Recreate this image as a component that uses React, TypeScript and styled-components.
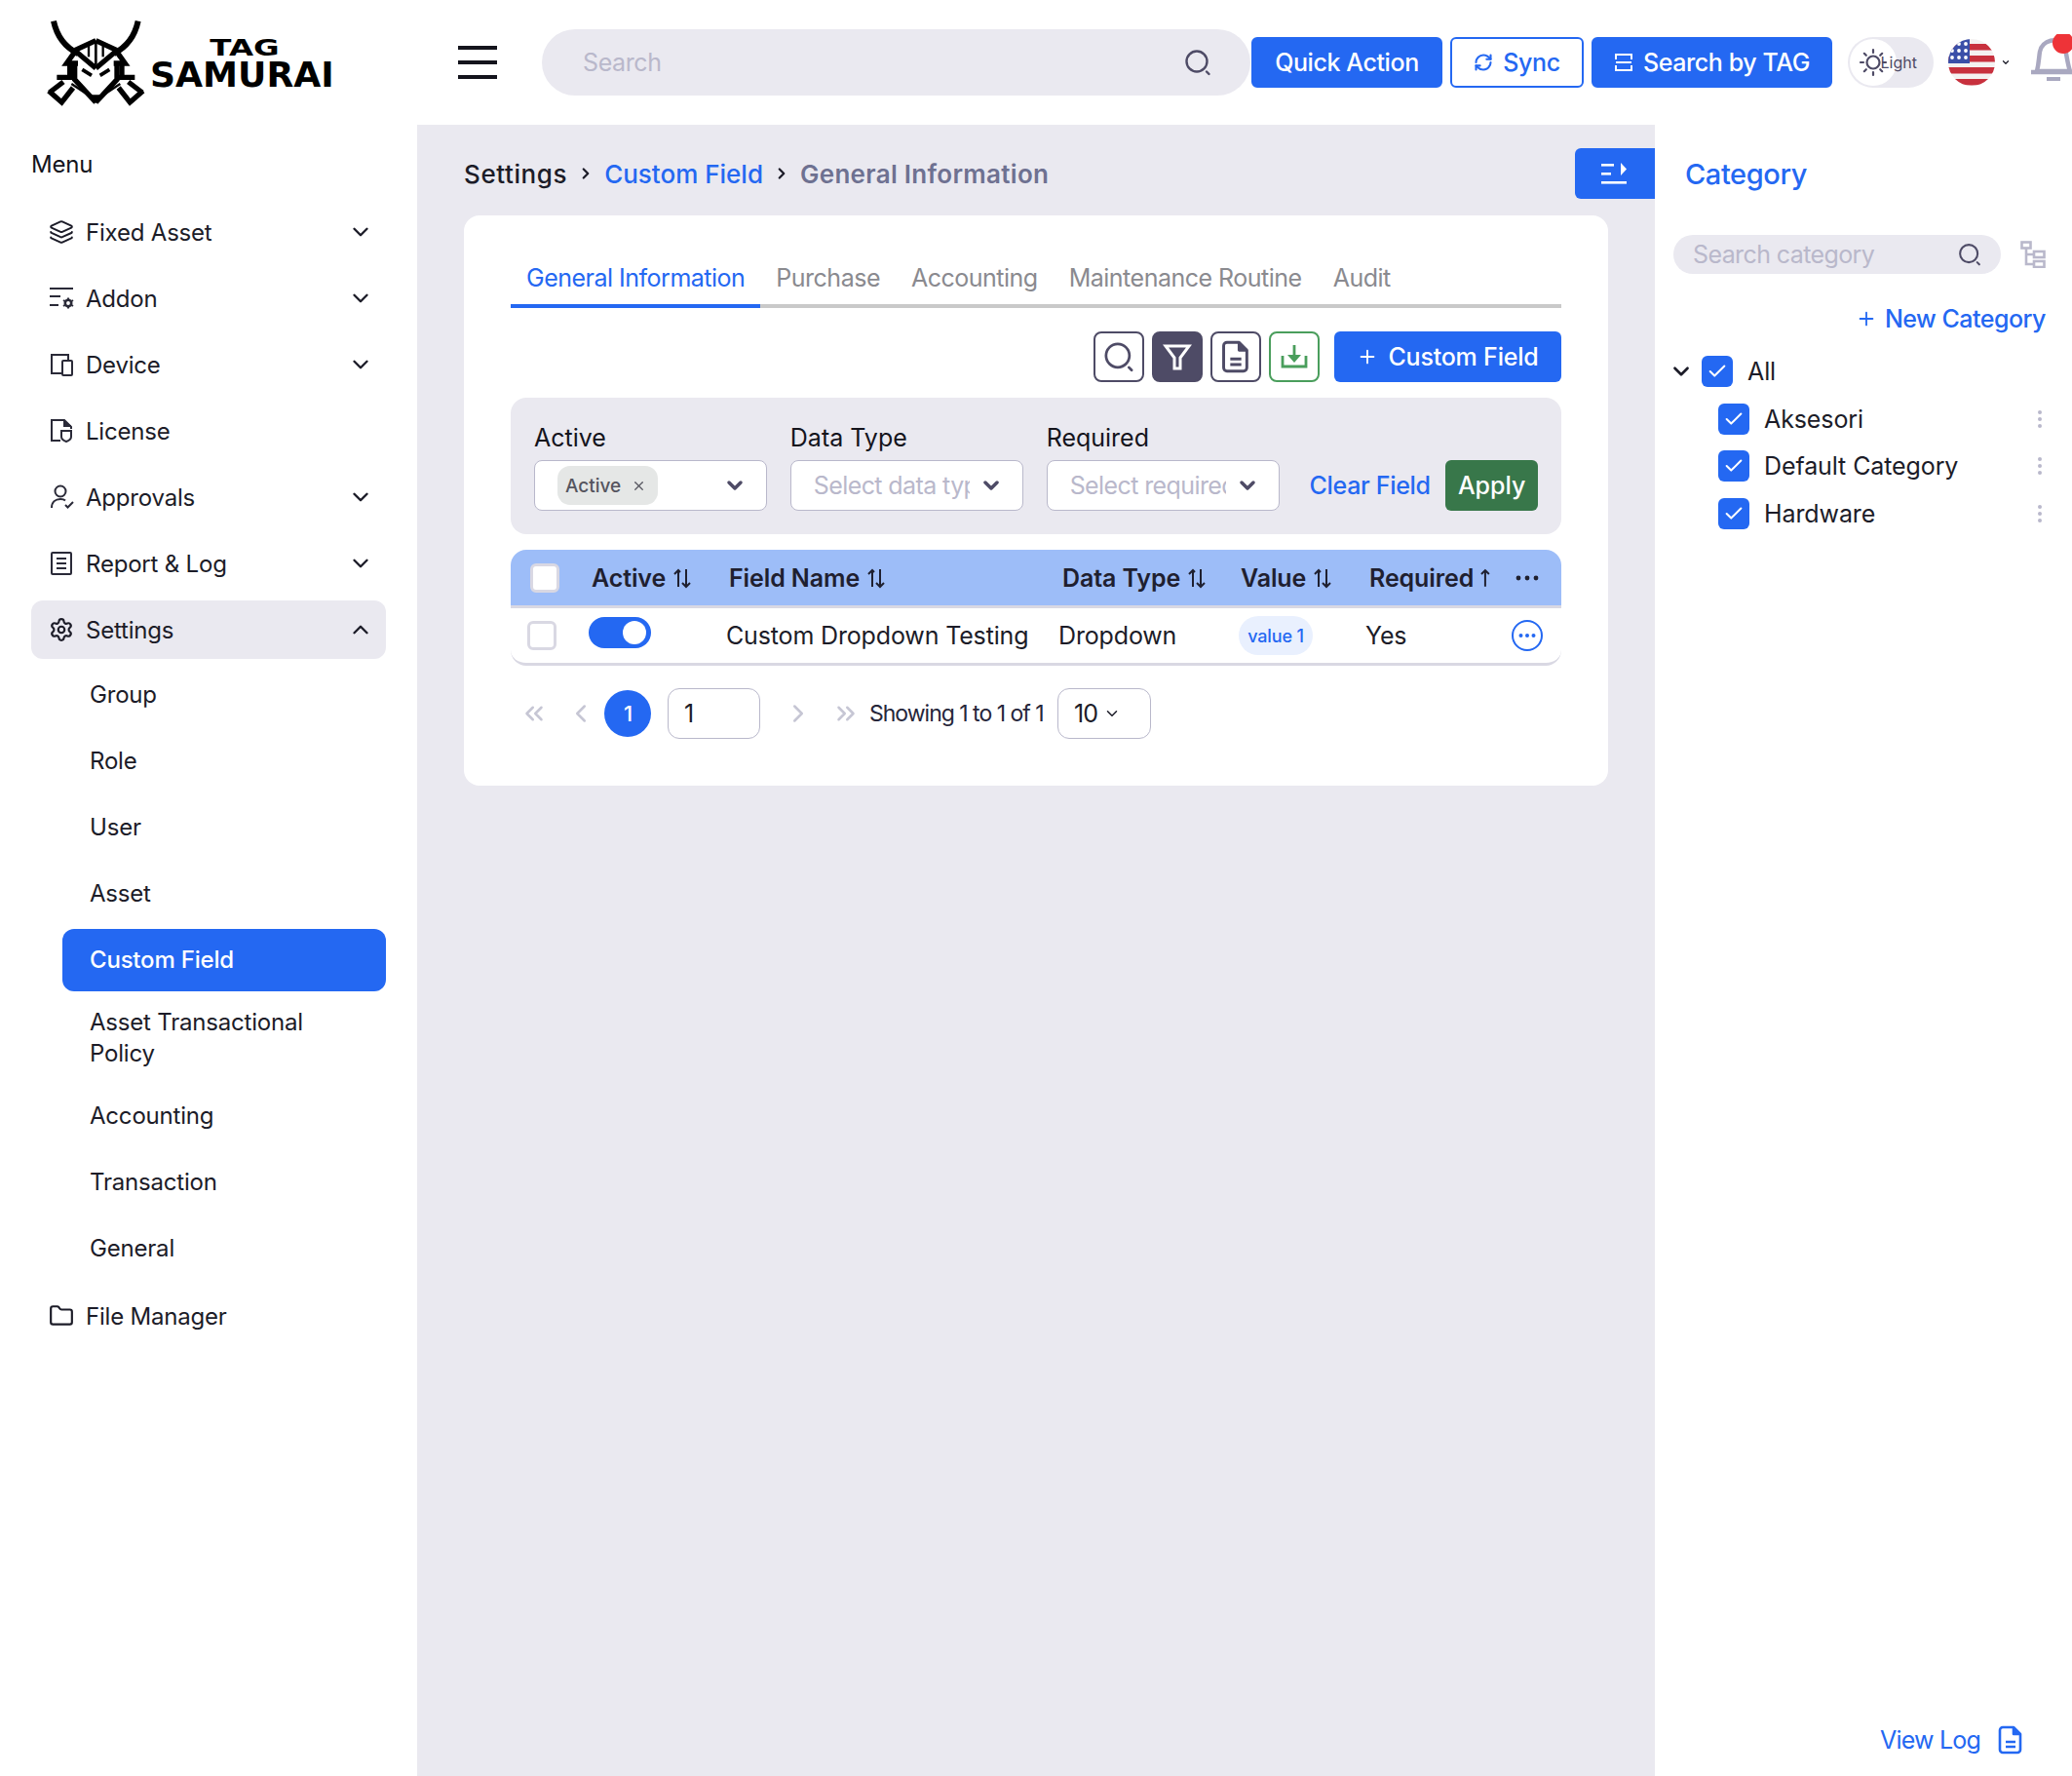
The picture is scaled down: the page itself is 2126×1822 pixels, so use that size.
import { createGlobalStyle, styled } from 'styled-components';
import type { ReactNode } from 'react';
import { ChevronDown, ChevronUp, ChevronLeft, ChevronRight, ChevronsLeft, ChevronsRight, Plus, Check, X, Layers, Settings, Folder, RefreshCw } from 'lucide-react';

const BLUE = '#2468f2';
const GREY = '#eae9f0';
const INK = '#1c1c28';

const GlobalStyle = createGlobalStyle`
  html, body { margin: 0; padding: 0; height: 100%; overflow: hidden; background: #fff; }
  * { box-sizing: border-box; }
  body { font-family: Inter, "Noto Sans", sans-serif; color: ${INK}; }
`;

const Page = styled.div`
  width: 2126px;
  height: 1822px;
  overflow: hidden;
  display: grid;
  grid-template-columns: 428px 1270px 428px;
  grid-template-rows: 128px 1fr;
`;

/* header */
const Header = styled.header`
  grid-column: 1 / -1;
  display: flex;
  align-items: center;
  padding-left: 30px;
  font-size: 25px;
  overflow: hidden;
  & > * { flex: none; }
`;

const LogoSvg = styled.svg`
  display: block;
  margin-top: -3px;
`;

const Burger = styled.div`
  margin-left: 110px;
  width: 40px;
  display: flex;
  flex-direction: column;
  gap: 11px;
  span { display: block; height: 4px; background: #14141c; }
`;

const SearchPill = styled.div`
  margin-left: 46px;
  width: 727px;
  height: 68px;
  border-radius: 34px;
  background: ${GREY};
  display: flex;
  align-items: center;
  justify-content: space-between;
  padding: 0 40px 0 42px;
  color: #b9b8cb;
  letter-spacing: -0.4px;
`;

const HeadButton = styled.button<{ $width: number; $gap: number; $outline?: boolean }>`
  width: ${p => p.$width}px;
  height: 52px;
  margin-left: ${p => p.$gap}px;
  border-radius: 6px;
  border: 2px solid ${BLUE};
  background: ${p => (p.$outline ? '#fff' : BLUE)};
  color: ${p => (p.$outline ? BLUE : '#fff')};
  font: 500 25px Inter, sans-serif;
  letter-spacing: -0.4px;
  display: flex;
  align-items: center;
  justify-content: center;
  gap: 10px;
  padding: 0;
  white-space: nowrap;
`;

const ThemeToggle = styled.div`
  position: relative;
  margin-left: 16px;
  width: 88px;
  height: 52px;
  border-radius: 26px;
  background: ${GREY};
  font-size: 16px;
  color: #4e4b66;
  display: flex;
  align-items: center;
  justify-content: flex-end;
  padding-right: 17px;
`;

const ThemeLabel = styled.span`
  position: relative;
  z-index: 1;
`;

const ThemeKnob = styled.span`
  position: absolute;
  left: 2px;
  top: 2px;
  width: 48px;
  height: 48px;
  border-radius: 50%;
  background: #fff;
  display: flex;
  align-items: center;
  justify-content: center;
`;

const FlagWrap = styled.div`
  margin-left: 15px;
  display: flex;
  align-items: center;
  gap: 6px;
`;

const BellWrap = styled.div`
  margin-left: 21px;
`;

/* sidebar */
const Sidebar = styled.aside`
  padding: 25px 32px 0;
  font-size: 24px;
  letter-spacing: -0.2px;
`;

const MenuTitle = styled.div`
  height: 32px;
  line-height: 32px;
  margin-bottom: 23px;
  color: #14141c;
`;

const NavList = styled.nav`
  display: flex;
  flex-direction: column;
  gap: 8px;
`;

const NavItem = styled.div<{ $open?: boolean }>`
  height: 60px;
  border-radius: 12px;
  background: ${p => (p.$open ? GREY : 'transparent')};
  display: flex;
  align-items: center;
  gap: 12px;
  padding: 0 13px 0 18px;
  svg { flex: none; }
  span { flex: 1; }
`;

const SubList = styled.div`
  margin: -3px 0 -1px 32px;
  display: flex;
  flex-direction: column;
  gap: 4px;
`;

const SubItem = styled.div<{ $active?: boolean; $tall?: boolean }>`
  height: ${p => (p.$tall ? 88 : 64)}px;
  border-radius: 12px;
  padding: 0 28px;
  display: flex;
  align-items: center;
  line-height: 32px;
  font-weight: ${p => (p.$active ? 500 : 400)};
  background: ${p => (p.$active ? BLUE : 'transparent')};
  color: ${p => (p.$active ? '#fff' : INK)};
`;

/* main column */
const Main = styled.main`
  position: relative;
  background: ${GREY};
  padding: 32px 48px 0;
`;

const Breadcrumb = styled.div`
  height: 36px;
  display: flex;
  align-items: center;
  gap: 10px;
  font-size: 26px;
  margin-bottom: 25px;
`;

const Crumb = styled.span<{ $color: string; $strong?: boolean; $spacing: number }>`
  color: ${p => p.$color};
  font-weight: ${p => (p.$strong ? 600 : 500)};
  letter-spacing: ${p => p.$spacing}px;
`;

const CollapseButton = styled.button`
  position: absolute;
  right: 0;
  top: 24px;
  width: 82px;
  height: 52px;
  border: 0;
  padding: 0;
  border-radius: 6px 0 0 6px;
  background: ${BLUE};
  display: flex;
  align-items: center;
  justify-content: center;
`;

const Card = styled.section`
  background: #fff;
  border-radius: 16px;
  height: 585px;
  padding: 36px 48px 0;
`;

const Tabs = styled.div`
  display: flex;
  border-bottom: 4px solid #c9c9c9;
  height: 59px;
  font-size: 25px;
  letter-spacing: -0.5px;
`;

const Tab = styled.div<{ $active?: boolean }>`
  height: 59px;
  padding: 0 16px;
  line-height: 57px;
  white-space: nowrap;
  color: ${p => (p.$active ? BLUE : '#8a8a8f')};
  border-bottom: 4px solid ${p => (p.$active ? BLUE : 'transparent')};
`;

const Toolbar = styled.div`
  margin-top: 24px;
  display: flex;
  justify-content: flex-end;
  align-items: center;
  gap: 8px;
`;

const ToolButton = styled.button<{ $tone?: 'dark' | 'green' }>`
  width: 52px;
  height: 52px;
  padding: 0;
  border-radius: 8px;
  border: 2px solid ${p => (p.$tone === 'green' ? '#4a9e5c' : '#4e4b66')};
  background: ${p => (p.$tone === 'dark' ? '#4e4b66' : '#fff')};
  display: flex;
  align-items: center;
  justify-content: center;
`;

const PrimaryButton = styled.button`
  margin-left: 7px;
  width: 233px;
  height: 52px;
  border: 0;
  border-radius: 6px;
  background: ${BLUE};
  color: #fff;
  font: 500 25px Inter, sans-serif;
  letter-spacing: -0.2px;
  display: flex;
  align-items: center;
  justify-content: center;
  gap: 10px;
`;

const FilterPanel = styled.div`
  margin-top: 16px;
  height: 140px;
  border-radius: 16px;
  background: ${GREY};
  padding: 24px;
  display: flex;
  align-items: flex-end;
  gap: 23.5px;
`;

const FilterField = styled.div`
  width: 240px;
  display: flex;
  flex-direction: column;
  gap: 6px;
`;

const FilterLabel = styled.label`
  font-size: 25px;
  line-height: 34px;
  color: #14141c;
`;

const SelectBox = styled.div`
  height: 52px;
  border: 1px solid #b9b8cb;
  border-radius: 8px;
  background: #fff;
  display: flex;
  align-items: center;
  justify-content: space-between;
  padding: 0 20px 0 23px;
`;

const Placeholder = styled.span`
  width: 160px;
  overflow: hidden;
  white-space: nowrap;
  font-size: 25px;
  letter-spacing: -0.6px;
  color: #b9b8cb;
`;

const Chip = styled.span`
  height: 40px;
  border-radius: 13px;
  background: #e5e7e6;
  display: inline-flex;
  align-items: center;
  gap: 11px;
  padding: 0 12px 0 8px;
  font-size: 19px;
  font-weight: 500;
  color: #55555f;
`;

const ClearLink = styled.span`
  color: ${BLUE};
  font-size: 25px;
  font-weight: 500;
  line-height: 52px;
  margin-left: 7px;
  letter-spacing: -0.3px;
  white-space: nowrap;
`;

const ApplyButton = styled.button`
  width: 95px;
  height: 52px;
  margin-left: -8px;
  border: 0;
  border-radius: 6px;
  background: #38774a;
  color: #fff;
  font: 500 25px Inter, sans-serif;
  padding: 0;
`;

const HeadRow = styled.div`
  margin-top: 16px;
  height: 60px;
  border-radius: 16px 16px 0 0;
  background: #9dbdf8;
  border-bottom: 3px solid #d9d8e3;
  display: grid;
  grid-template-columns: 83px 141px 342px 183px 132px 125px 1fr;
  align-items: center;
  font-size: 25px;
  font-weight: 600;
  letter-spacing: -0.1px;
  color: #1f2030;
`;

const HeadCell = styled.div`
  display: flex;
  align-items: center;
  gap: 6px;
  white-space: nowrap;
`;

const CheckCell = styled.div`
  padding-left: 20px;
  display: flex;
`;

const DotsCell = styled.div`
  display: flex;
  justify-content: center;
  padding-left: 2px;
`;

const BlankBox = styled.span`
  width: 30px;
  height: 30px;
  border-radius: 6px;
  background: #fff;
  border: 3px solid #d9d8e3;
  display: block;
`;

const BodyRow = styled.div`
  height: 59px;
  border-radius: 0 0 16px 16px;
  border-bottom: 3px solid #d9d8e3;
  display: grid;
  grid-template-columns: 80px 141px 341px 185px 130px 125px 1fr;
  align-items: center;
  font-size: 25px;
  letter-spacing: -0.15px;
  white-space: nowrap;
  & > div:first-child { padding-left: 17px; }
  & > div:last-child { padding-left: 6px; }
`;

const Switch = styled.span`
  position: relative;
  display: block;
  width: 64px;
  height: 32px;
  margin-top: -6px;
  border-radius: 16px;
  background: ${BLUE};
  &::after {
    content: '';
    position: absolute;
    right: 5px;
    top: 4px;
    width: 24px;
    height: 24px;
    border-radius: 50%;
    background: #fff;
  }
`;

const ValueTag = styled.span`
  display: inline-flex;
  align-items: center;
  justify-content: center;
  width: 76px;
  height: 40px;
  border-radius: 20px;
  background: #e9f0fe;
  color: ${BLUE};
  font-size: 18px;
  font-weight: 500;
`;

const Pagination = styled.div`
  margin-top: 23px;
  height: 52px;
  display: flex;
  align-items: center;
  font-size: 23px;
  letter-spacing: -1px;
`;

const PageIcon = styled.span<{ $width: number }>`
  width: ${p => p.$width}px;
  flex: none;
  display: flex;
  justify-content: center;
  color: #c6c6d4;
  svg { flex: none; }
`;

const PageDot = styled.span`
  width: 48px;
  height: 48px;
  margin-right: 17px;
  border-radius: 50%;
  background: ${BLUE};
  color: #fff;
  font-size: 22px;
  font-weight: 500;
  display: flex;
  align-items: center;
  justify-content: center;
`;

const PageBox = styled.div<{ $width: number }>`
  width: ${p => p.$width}px;
  height: 52px;
  border: 1px solid #b9b8cb;
  border-radius: 12px;
  display: flex;
  align-items: center;
  justify-content: flex-start;
  gap: 6px;
  padding-left: 16px;
  font-size: 25px;
`;

const ShowingText = styled.span`
  width: 193px;
  margin-left: 14px;
  white-space: nowrap;
  color: #26263a;
`;

/* category panel */
const Panel = styled.aside`
  position: relative;
  padding: 32px 27px 0 19px;
  font-size: 25px;
`;

const PanelTitle = styled.h2`
  margin: 0 0 0 12px;
  height: 38px;
  line-height: 38px;
  font-size: 29px;
  font-weight: 500;
  letter-spacing: -0.4px;
  color: ${BLUE};
`;

const CategoryRow = styled.div`
  margin-top: 43px;
  display: flex;
  align-items: center;
  gap: 20px;
`;

const CategorySearch = styled.div`
  width: 336px;
  height: 40px;
  border-radius: 20px;
  background: ${GREY};
  display: flex;
  align-items: center;
  justify-content: space-between;
  padding: 0 20px;
  color: #b9b8cb;
  font-size: 25px;
  letter-spacing: -0.6px;
`;

const NewCategory = styled.div`
  margin-top: 26px;
  height: 40px;
  display: flex;
  align-items: center;
  justify-content: flex-end;
  gap: 8px;
  color: ${BLUE};
  font-weight: 500;
  letter-spacing: -0.5px;
`;

const Tree = styled.div`
  margin-top: 18px;
  display: flex;
  flex-direction: column;
  gap: 16.6px;
`;

const TreeRow = styled.div<{ $child?: boolean }>`
  height: 32px;
  display: flex;
  align-items: center;
  padding-left: ${p => (p.$child ? 46 : 0)}px;
  gap: 15px;
`;

const TreeLabel = styled.span`
  flex: 1;
  letter-spacing: -0.1px;
`;

const TreeToggle = styled.span`
  width: 16px;
  margin-right: -2px;
  display: flex;
  justify-content: center;
  svg { flex: none; }
`;

const CheckBox = styled.span`
  width: 32px;
  height: 32px;
  flex: none;
  border-radius: 6px;
  background: ${BLUE};
  color: #fff;
  display: flex;
  align-items: center;
  justify-content: center;
`;

const Kebab = styled.div`
  display: flex;
  flex-direction: column;
  gap: 3px;
  margin-right: 4px;
  i { width: 4px; height: 4px; border-radius: 50%; background: #b9b8cb; display: block; }
`;

const ViewLog = styled.div`
  position: absolute;
  right: 48px;
  bottom: 22px;
  display: flex;
  align-items: center;
  gap: 16px;
  color: ${BLUE};
  letter-spacing: -0.8px;
`;

/* drawings */
const MaskHalf = () => (
  <>
    <path d="M75 35 Q90 105 150 135" strokeWidth={18} />
    <path d="M205 95 L140 125 L205 180" />
    <path d="M140 130 L115 165 H150 M85 208 H140 M125 170 V215 M62 255 L105 222 M60 250 L100 285 L135 240" />
    <path d="M140 165 V215 L205 285" />
    <path d="M130 228 L190 268" strokeWidth={7} />
    <path d="M163 184 L192 202" strokeWidth={11} />
    <path d="M183 108 V145" strokeWidth={7} />
  </>
);

const Logo = () => (
  <LogoSvg width={330} height={105} viewBox="0 0 990 315">
    <g fill="none" stroke="#000" strokeWidth={16}>
      <MaskHalf />
      <g transform="matrix(-1 0 0 1 410 0)"><MaskHalf /></g>
      <path d="M205 95 V170" strokeWidth={8} />
    </g>
    <path d="M185 262 H225 L205 288 Z" fill="#000" />
    <text x={556} y={140} fontFamily="DejaVu Sans" fontWeight={700} fontSize={70} textLength={214} lengthAdjust="spacingAndGlyphs">TAG</text>
    <text x={372} y={238} fontFamily="DejaVu Sans" fontWeight={700} fontSize={105} textLength={566} lengthAdjust="spacingAndGlyphs">SAMURAI</text>
  </LogoSvg>
);

const SearchGlyph = ({ size = 28, color = '#4e4b66' }: { size?: number; color?: string }) => (
  <svg width={size} height={size} viewBox="0 0 28 28" fill="none" stroke={color} strokeWidth={2.4}>
    <circle cx={13} cy={13} r={10.5} />
    <path d="M23 23.5 L25.5 26" strokeLinecap="round" />
  </svg>
);

const Sun = () => (
  <svg width={30} height={30} viewBox="0 0 30 30" fill="none" stroke="#4e4b66" strokeWidth={2.2} strokeLinecap="round">
    <circle cx={15} cy={15} r={6.5} />
    <path d="M15 2v3M15 25v3M2 15h3M25 15h3M5.8 5.8l2 2M22.2 22.2l2 2M5.8 24.2l2-2M22.2 7.8l2-2" />
  </svg>
);

const UsFlag = () => (
  <svg width={48} height={48} viewBox="0 0 48 48">
    <defs>
      <clipPath id="flagCircle"><circle cx={24} cy={24} r={24} /></clipPath>
    </defs>
    <g clipPath="url(#flagCircle)">
      <rect width={48} height={48} fill="#f4f1f1" />
      {[5, 17, 29, 41].map(y => <rect key={y} y={y} width={48} height={6.5} fill="#c8313e" />)}
      <rect width={22} height={25} fill="#3a4fa8" />
      {[4, 11, 18].flatMap(x => [5, 12, 19].map(y => (
        <circle key={`${x}-${y}`} cx={x} cy={y} r={1.9} fill="#fff" />
      )))}
    </g>
  </svg>
);

const Bell = () => (
  <svg width={52} height={52} viewBox="0 0 52 52" fill="none">
    <path d="M6 38 C8 30 8 24 9 18 C11 6 28 2 34 12 C36 16 37 30 40 38 Z" stroke="#a9a8c0" strokeWidth={4.5} strokeLinejoin="round" />
    <path d="M0 39 H46" stroke="#a9a8c0" strokeWidth={4.5} />
    <rect x={16} y={44} width={14} height={4} fill="#a9a8c0" />
    <circle cx={33} cy={9} r={11} fill="#ee3338" />
  </svg>
);

const AddonIcon = () => (
  <svg width={26} height={26} viewBox="0 0 26 26" fill="none" stroke="#2a2a38" strokeWidth={2}>
    <path d="M1 3h24M1 11h11M1 20h9" />
    <circle cx={20} cy={18} r={3.2} strokeWidth={2.6} />
    <path d="M20 12.5v2M20 21.5v2M15 15l1.6 1M23.4 20l1.6 1M15 21l1.6-1M23.4 16l1.6-1" />
  </svg>
);

const DeviceIcon = () => (
  <svg width={26} height={26} viewBox="0 0 26 26" fill="none" stroke="#2a2a38" strokeWidth={2}>
    <path d="M14 22H3V3h17v6" />
    <rect x={14} y={9} width={10} height={15} rx={1} />
  </svg>
);

const LicenseIcon = () => (
  <svg width={26} height={26} viewBox="0 0 26 26" fill="none" stroke="#2a2a38" strokeWidth={2}>
    <path d="M12 23H3V2h13l7 7v2" />
    <path d="M16 2v6h7" fill="#2a2a38" />
    <path d="M13 13h10v6c0 3-2 4-5 5-3-1-5-2-5-5z" />
  </svg>
);

const ApprovalIcon = () => (
  <svg width={26} height={26} viewBox="0 0 26 26" fill="none" stroke="#2a2a38" strokeWidth={2}>
    <circle cx={12} cy={7} r={5.5} />
    <path d="M3 24c0-6 4-9 9-9 2.5 0 4 .5 5 1.5" />
    <path d="M17 21l2.5 2.5L25 18" />
  </svg>
);

const ReportIcon = () => (
  <svg width={26} height={26} viewBox="0 0 26 26" fill="none" stroke="#2a2a38" strokeWidth={2}>
    <rect x={3} y={2} width={20} height={22} rx={1} />
    <path d="M8 8h10M8 13h10M8 18h10" />
  </svg>
);

const DocIcon = ({ color, size = 34 }: { color: string; size?: number }) => (
  <svg width={size} height={size} viewBox="0 0 30 30" fill="none" stroke={color} strokeWidth={2.6} strokeLinejoin="round">
    <path d="M7 2h11l7 7v16a3 3 0 0 1-3 3H7a3 3 0 0 1-3-3V5a3 3 0 0 1 3-3z" />
    <path d="M10 17h10M10 22h10" />
    <path d="M18 2v7h7" fill={color} />
  </svg>
);

const FunnelIcon = () => (
  <svg width={30} height={30} viewBox="0 0 30 30" fill="none" stroke="#fff" strokeWidth={3}>
    <path d="M3 4h24L18 16v11h-6V16z" />
  </svg>
);

const ExportIcon = () => (
  <svg width={30} height={30} viewBox="0 0 30 30" fill="none" stroke="#4a9e5c" strokeWidth={2.8}>
    <path d="M3 14v11h24V14" />
    <path d="M15 3v13" />
    <path d="M8 13h14l-7 8z" fill="#4a9e5c" stroke="none" />
  </svg>
);

const SortIcon = () => (
  <svg width={22} height={22} viewBox="0 0 22 22" fill="none" stroke="#1f2030" strokeWidth={2}>
    <path d="M7 20V3M3 7l4-4 2 2M15 2v18M11 16l4 4 4-4" />
  </svg>
);

const UpIcon = () => (
  <svg width={12} height={22} viewBox="0 0 12 22" fill="none" stroke="#1f2030" strokeWidth={2}>
    <path d="M6 20V3M2 7l4-4 4 4" />
  </svg>
);

const ThreeDots = ({ color = '#1f2030' }: { color?: string }) => (
  <svg width={24} height={6} viewBox="0 0 24 6" fill={color}>
    <circle cx={3} cy={3} r={2.4} />
    <circle cx={12} cy={3} r={2.4} />
    <circle cx={21} cy={3} r={2.4} />
  </svg>
);

const CircleDots = () => (
  <svg width={32} height={32} viewBox="0 0 32 32" fill="none">
    <circle cx={16} cy={16} r={15} stroke={BLUE} strokeWidth={2} />
    <circle cx={9.5} cy={16} r={2} fill={BLUE} />
    <circle cx={16} cy={16} r={2} fill={BLUE} />
    <circle cx={22.5} cy={16} r={2} fill={BLUE} />
  </svg>
);

const CollapseIcon = () => (
  <svg width={28} height={24} viewBox="0 0 28 24" fill="#fff">
    <rect x={0} y={2} width={13} height={2.6} />
    <rect x={0} y={11} width={10} height={2.6} />
    <rect x={0} y={20} width={26} height={2.6} />
    <path d="M20 1l6 6.5-6 6.5z" />
  </svg>
);

const TreeIcon = () => (
  <svg width={26} height={28} viewBox="0 0 26 28" fill="none" stroke="#b9b8cb" strokeWidth={2.6}>
    <rect x={1.5} y={1.5} width={9} height={6} />
    <rect x={14} y={11} width={10.5} height={6} />
    <rect x={14} y={21} width={10.5} height={6} />
    <path d="M6 8v16h8M6 14h8" />
  </svg>
);

const TagIcon = () => (
  <svg width={20} height={20} viewBox="0 0 20 20" fill="none" stroke="#fff" strokeWidth={2}>
    <path d="M2 7V2h16v5M2 13v5h16v-5M2 10h16" />
  </svg>
);

const navChevron = <ChevronDown size={26} strokeWidth={2.2} />;

const topNav: { label: string; icon: ReactNode; chevron: boolean }[] = [
  { label: 'Fixed Asset', icon: <Layers size={26} strokeWidth={1.8} />, chevron: true },
  { label: 'Addon', icon: <AddonIcon />, chevron: true },
  { label: 'Device', icon: <DeviceIcon />, chevron: true },
  { label: 'License', icon: <LicenseIcon />, chevron: false },
  { label: 'Approvals', icon: <ApprovalIcon />, chevron: true },
  { label: 'Report & Log', icon: <ReportIcon />, chevron: true },
];

const tabs = ['General Information', 'Purchase', 'Accounting', 'Maintenance Routine', 'Audit'];

export default function App() {
  return (
    <Page>
      <GlobalStyle />
      <Header>
        <Logo />
        <Burger><span /><span /><span /></Burger>
        <SearchPill>
          Search
          <SearchGlyph />
        </SearchPill>
        <HeadButton $width={196} $gap={1}>Quick Action</HeadButton>
        <HeadButton $width={137} $gap={8} $outline><RefreshCw size={20} strokeWidth={2.5} />Sync</HeadButton>
        <HeadButton $width={247} $gap={8}><TagIcon />Search by TAG</HeadButton>
        <ThemeToggle>
          <ThemeLabel>Light</ThemeLabel>
          <ThemeKnob><Sun /></ThemeKnob>
        </ThemeToggle>
        <FlagWrap>
          <UsFlag />
          <ChevronDown size={10} strokeWidth={3} />
        </FlagWrap>
        <BellWrap><Bell /></BellWrap>
      </Header>

      <Sidebar>
        <MenuTitle>Menu</MenuTitle>
        <NavList>
          {topNav.map(item => (
            <NavItem key={item.label}>
              {item.icon}
              <span>{item.label}</span>
              {item.chevron && navChevron}
            </NavItem>
          ))}
          <NavItem $open>
            <Settings size={26} strokeWidth={2} />
            <span>Settings</span>
            <ChevronUp size={26} strokeWidth={2.2} />
          </NavItem>
          <SubList>
            <SubItem>Group</SubItem>
            <SubItem>Role</SubItem>
            <SubItem>User</SubItem>
            <SubItem>Asset</SubItem>
            <SubItem $active>Custom Field</SubItem>
            <SubItem $tall>Asset Transactional Policy</SubItem>
            <SubItem>Accounting</SubItem>
            <SubItem>Transaction</SubItem>
            <SubItem>General</SubItem>
          </SubList>
          <NavItem>
            <Folder size={26} strokeWidth={2} />
            <span>File Manager</span>
          </NavItem>
        </NavList>
      </Sidebar>

      <Main>
        <Breadcrumb>
          <Crumb $color="#1c1c28" $spacing={0.6}>Settings</Crumb>
          <ChevronRight size={18} strokeWidth={3} />
          <Crumb $color={BLUE} $spacing={0}>Custom Field</Crumb>
          <ChevronRight size={18} strokeWidth={3} />
          <Crumb $color="#6e7191" $strong $spacing={0.3}>General Information</Crumb>
        </Breadcrumb>
        <CollapseButton><CollapseIcon /></CollapseButton>
        <Card>
          <Tabs>
            {tabs.map((t, i) => <Tab key={t} $active={i === 0}>{t}</Tab>)}
          </Tabs>
          <Toolbar>
            <ToolButton><SearchGlyph size={32} /></ToolButton>
            <ToolButton $tone="dark"><FunnelIcon /></ToolButton>
            <ToolButton><DocIcon color="#4e4b66" /></ToolButton>
            <ToolButton $tone="green"><ExportIcon /></ToolButton>
            <PrimaryButton><Plus size={22} strokeWidth={2} />Custom Field</PrimaryButton>
          </Toolbar>
          <FilterPanel>
            <FilterField>
              <FilterLabel>Active</FilterLabel>
              <SelectBox>
                <Chip>Active <X size={15} strokeWidth={2} /></Chip>
                <ChevronDown size={24} strokeWidth={3.5} color="#4e4b66" />
              </SelectBox>
            </FilterField>
            <FilterField>
              <FilterLabel>Data Type</FilterLabel>
              <SelectBox>
                <Placeholder>Select data type</Placeholder>
                <ChevronDown size={24} strokeWidth={3.5} color="#4e4b66" />
              </SelectBox>
            </FilterField>
            <FilterField>
              <FilterLabel>Required</FilterLabel>
              <SelectBox>
                <Placeholder>Select required</Placeholder>
                <ChevronDown size={24} strokeWidth={3.5} color="#4e4b66" />
              </SelectBox>
            </FilterField>
            <ClearLink>Clear Field</ClearLink>
            <ApplyButton>Apply</ApplyButton>
          </FilterPanel>
          <HeadRow>
            <CheckCell><BlankBox /></CheckCell>
            <HeadCell>Active <SortIcon /></HeadCell>
            <HeadCell>Field Name <SortIcon /></HeadCell>
            <HeadCell>Data Type <SortIcon /></HeadCell>
            <HeadCell>Value <SortIcon /></HeadCell>
            <HeadCell>Required <UpIcon /></HeadCell>
            <DotsCell><ThreeDots /></DotsCell>
          </HeadRow>
          <BodyRow>
            <div><BlankBox /></div>
            <div><Switch /></div>
            <div>Custom Dropdown Testing</div>
            <div>Dropdown</div>
            <div><ValueTag>value 1</ValueTag></div>
            <div>Yes</div>
            <DotsCell><CircleDots /></DotsCell>
          </BodyRow>
          <Pagination>
            <PageIcon $width={48}><ChevronsLeft size={30} strokeWidth={2} /></PageIcon>
            <PageIcon $width={48}><ChevronLeft size={30} strokeWidth={2} /></PageIcon>
            <PageDot>1</PageDot>
            <PageBox $width={95}>1</PageBox>
            <PageIcon $width={78}><ChevronRight size={30} strokeWidth={2} /></PageIcon>
            <PageIcon $width={20}><ChevronsRight size={30} strokeWidth={2} /></PageIcon>
            <ShowingText>Showing 1 to 1 of 1</ShowingText>
            <PageBox $width={96}>10 <ChevronDown size={18} strokeWidth={2} /></PageBox>
          </Pagination>
        </Card>
      </Main>

      <Panel>
        <PanelTitle>Category</PanelTitle>
        <CategoryRow>
          <CategorySearch>
            Search category
            <SearchGlyph size={24} />
          </CategorySearch>
          <TreeIcon />
        </CategoryRow>
        <NewCategory><Plus size={22} strokeWidth={2} />New Category</NewCategory>
        <Tree>
          <TreeRow>
            <TreeToggle><ChevronDown size={26} strokeWidth={2.5} /></TreeToggle>
            <CheckBox><Check size={22} strokeWidth={2.2} /></CheckBox>
            <TreeLabel>All</TreeLabel>
          </TreeRow>
          {['Aksesori', 'Default Category', 'Hardware'].map(name => (
            <TreeRow key={name} $child>
              <CheckBox><Check size={22} strokeWidth={2.2} /></CheckBox>
              <TreeLabel>{name}</TreeLabel>
              <Kebab><i /><i /><i /></Kebab>
            </TreeRow>
          ))}
        </Tree>
        <ViewLog>View Log <DocIcon color={BLUE} size={30} /></ViewLog>
      </Panel>
    </Page>
  );
}
